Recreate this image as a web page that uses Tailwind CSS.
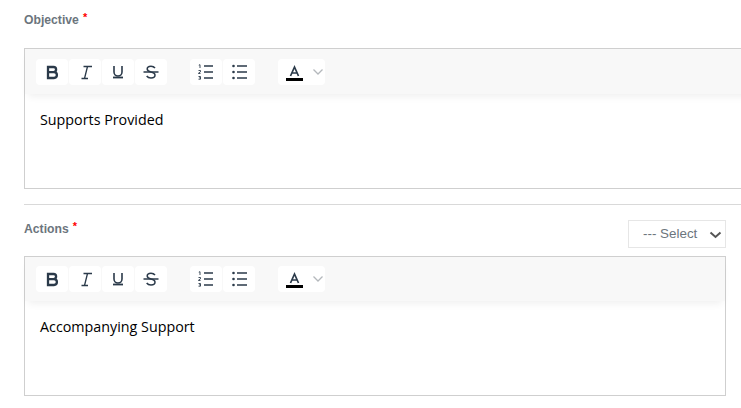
<!DOCTYPE html>
<html lang="en">
<head>
    <meta charset="UTF-8">
    <title>Objective and Actions</title>
    <script src="https://cdn.jsdelivr.net/npm/@tailwindcss/browser@4"></script>
</head>
<body class="bg-white h-[408px] overflow-hidden font-['Liberation_Sans',sans-serif]">
<div class="pl-6 w-[741px] overflow-hidden">
    <!-- Objective -->
    <div class="h-12 pt-3">
        <label class="flex items-start text-[12.2px] font-bold text-[#6c757d] leading-[16px]">Objective<span class="text-[#f00] text-[11px] leading-[10px] ml-1">*</span></label>
    </div>
    <div class="w-[760px] h-[141px] border border-[#cfcfcf]">
        <div class="h-[45px] bg-[#f8f8f8] shadow-[0_5px_8px_-3px_rgba(0,0,0,0.07)] flex items-start pt-[10px] pl-[11px]">
            <div class="flex gap-[1px]">
                <button class="w-8 h-[26px] bg-white rounded-sm flex items-center justify-center">
                    <svg width="16" height="16" viewBox="0 0 16 16" fill="none" stroke="#2b3a4a" stroke-width="2.3"><path d="M4 3h5.500a2.600 2.600 0 0 1 0 5.200H4zM4 8.200h6a2.900 2.900 0 0 1 0 5.800H4zM4 1.900v13.200"/></svg>
                </button>
                <button class="w-8 h-[26px] bg-white rounded-sm flex items-center justify-center">
                    <svg width="16" height="16" viewBox="0 0 16 16" fill="none" stroke="#2b3a4a" stroke-width="1.3"><path d="M6.500 2.500h8.500M4.500 14.500h6.500M10.500 2.500 7.500 14.500"/></svg>
                </button>
                <button class="w-8 h-[26px] bg-white rounded-sm flex items-center justify-center">
                    <svg width="16" height="16" viewBox="0 0 16 16" fill="none" stroke="#2b3a4a" stroke-width="1.6"><path d="M4 2v6a4 4 0 0 0 8 0V2"/><path d="M3 13.500h10" stroke-width="1.800"/></svg>
                </button>
                <button class="w-8 h-[26px] bg-white rounded-sm flex items-center justify-center">
                    <svg width="16" height="16" viewBox="0 0 16 16" fill="none" stroke="#2b3a4a" stroke-width="1.5"><path d="M0.500 8h15"/><path d="M12 4C11 2.700 9.500 2.200 8 2.200c-2 0-3.800 1-3.800 2.800 0 1.800 2 2.500 3.800 3 2 .5 4 1.200 4 3.100 0 1.900-2 3-4 3-1.800 0-3.400-.7-4.300-2.100"/></svg>
                </button>
            </div>
            <div class="flex gap-[1px] ml-[23px]">
                <button class="w-8 h-[26px] bg-white rounded-sm flex items-center justify-center">
                    <svg width="16" height="16" viewBox="0 0 16 16" fill="none" stroke="#2b3a4a"><path d="M6 2h9M6 8h9M6 14h9" stroke-width="1.700"/><path d="M.800 1.200l1.200-.5v3.300M.500 6.500h2v1.300l-2 1.300v.4h2M.500 12.500h2v1.300h-1 1v1.400h-2" stroke-width=".9"/></svg>
                </button>
                <button class="w-8 h-[26px] bg-white rounded-sm flex items-center justify-center">
                    <svg width="16" height="16" viewBox="0 0 16 16" fill="none" stroke="#2b3a4a"><path d="M6 2h10M6 8h10M6 14h10" stroke-width="1.700"/><circle cx="2.500" cy="2" r="1.300" fill="#2b3a4a" stroke="none"/><circle cx="2.500" cy="8" r="1.300" fill="#2b3a4a" stroke="none"/><circle cx="2.500" cy="14" r="1.300" fill="#2b3a4a" stroke="none"/></svg>
                </button>
            </div>
            <div class="ml-[23px] w-[47px] h-[26px] bg-white rounded-sm flex items-center pl-[7px]">
                <svg width="18" height="18" viewBox="0 0 18 18" fill="none"><path d="M5.500 13 9.500 4 13.500 13M6.800 10h5.400" stroke="#2b3a4a" stroke-width="1.700"/><rect x="1" y="15" width="17" height="3" fill="#000"/></svg>
                <svg class="ml-[10px]" width="10" height="6" viewBox="0 0 10 6" fill="none" stroke="#b4b8bc" stroke-width="1.300"><path d="M.500 .500 5 5 9.500 .500"/></svg>
            </div>
        </div>
        <div class="pl-[15px] pt-4 text-[14.3px] leading-[20px] text-black font-['Open_Sans',sans-serif]">Supports Provided</div>
    </div>

    <hr class="border-[#d9d9d9] mt-[15px]">

    <!-- Actions -->
    <div class="h-[51px] flex items-start justify-between pr-[15px]">
        <label class="flex items-start text-[12.2px] font-bold text-[#6c757d] leading-[16px] mt-4">Actions<span class="text-[#f00] text-[11px] leading-[10px] ml-1">*</span></label>
        <div class="relative mt-[15px]">
            <select class="block w-[98px] h-7 border border-[#e6e6e6] bg-white text-[13.4px] text-[#6c757d] pl-[14px] pt-[1px] appearance-none">
                <option>--- Select</option>
            </select>
            <svg class="absolute right-[4px] top-[11px]" width="13" height="8" viewBox="0 0 13 8" fill="none" stroke="#555" stroke-width="2"><path d="M1.500 1.500 6.500 6 11.500 1.500"/></svg>
        </div>
    </div>
    <div class="w-[702px] h-[140px] border border-[#cfcfcf]">
        <div class="h-11 bg-[#f8f8f8] shadow-[0_5px_8px_-3px_rgba(0,0,0,0.07)] flex items-start pt-[9px] pl-[11px]">
            <div class="flex gap-[1px]">
                <button class="w-8 h-[26px] bg-white rounded-sm flex items-center justify-center">
                    <svg width="16" height="16" viewBox="0 0 16 16" fill="none" stroke="#2b3a4a" stroke-width="2.3"><path d="M4 3h5.500a2.600 2.600 0 0 1 0 5.200H4zM4 8.200h6a2.900 2.900 0 0 1 0 5.800H4zM4 1.900v13.200"/></svg>
                </button>
                <button class="w-8 h-[26px] bg-white rounded-sm flex items-center justify-center">
                    <svg width="16" height="16" viewBox="0 0 16 16" fill="none" stroke="#2b3a4a" stroke-width="1.3"><path d="M6.500 2.500h8.500M4.500 14.500h6.500M10.500 2.500 7.500 14.500"/></svg>
                </button>
                <button class="w-8 h-[26px] bg-white rounded-sm flex items-center justify-center">
                    <svg width="16" height="16" viewBox="0 0 16 16" fill="none" stroke="#2b3a4a" stroke-width="1.6"><path d="M4 2v6a4 4 0 0 0 8 0V2"/><path d="M3 13.500h10" stroke-width="1.800"/></svg>
                </button>
                <button class="w-8 h-[26px] bg-white rounded-sm flex items-center justify-center">
                    <svg width="16" height="16" viewBox="0 0 16 16" fill="none" stroke="#2b3a4a" stroke-width="1.5"><path d="M0.500 8h15"/><path d="M12 4C11 2.700 9.500 2.200 8 2.200c-2 0-3.800 1-3.800 2.800 0 1.800 2 2.500 3.800 3 2 .5 4 1.200 4 3.100 0 1.900-2 3-4 3-1.800 0-3.400-.7-4.300-2.100"/></svg>
                </button>
            </div>
            <div class="flex gap-[1px] ml-[23px]">
                <button class="w-8 h-[26px] bg-white rounded-sm flex items-center justify-center">
                    <svg width="16" height="16" viewBox="0 0 16 16" fill="none" stroke="#2b3a4a"><path d="M6 2h9M6 8h9M6 14h9" stroke-width="1.700"/><path d="M.800 1.200l1.200-.5v3.300M.500 6.500h2v1.300l-2 1.300v.4h2M.500 12.500h2v1.300h-1 1v1.400h-2" stroke-width=".9"/></svg>
                </button>
                <button class="w-8 h-[26px] bg-white rounded-sm flex items-center justify-center">
                    <svg width="16" height="16" viewBox="0 0 16 16" fill="none" stroke="#2b3a4a"><path d="M6 2h10M6 8h10M6 14h10" stroke-width="1.700"/><circle cx="2.500" cy="2" r="1.300" fill="#2b3a4a" stroke="none"/><circle cx="2.500" cy="8" r="1.300" fill="#2b3a4a" stroke="none"/><circle cx="2.500" cy="14" r="1.300" fill="#2b3a4a" stroke="none"/></svg>
                </button>
            </div>
            <div class="ml-[23px] w-[47px] h-[26px] bg-white rounded-sm flex items-center pl-[7px]">
                <svg width="18" height="18" viewBox="0 0 18 18" fill="none"><path d="M5.500 13 9.500 4 13.500 13M6.800 10h5.400" stroke="#2b3a4a" stroke-width="1.700"/><rect x="1" y="15" width="17" height="3" fill="#000"/></svg>
                <svg class="ml-[10px]" width="10" height="6" viewBox="0 0 10 6" fill="none" stroke="#b4b8bc" stroke-width="1.300"><path d="M.500 .500 5 5 9.500 .500"/></svg>
            </div>
        </div>
        <div class="pl-[15px] pt-4 text-[14.3px] leading-[20px] text-black font-['Open_Sans',sans-serif]">Accompanying Support</div>
    </div>
</div>
</body>
</html>
